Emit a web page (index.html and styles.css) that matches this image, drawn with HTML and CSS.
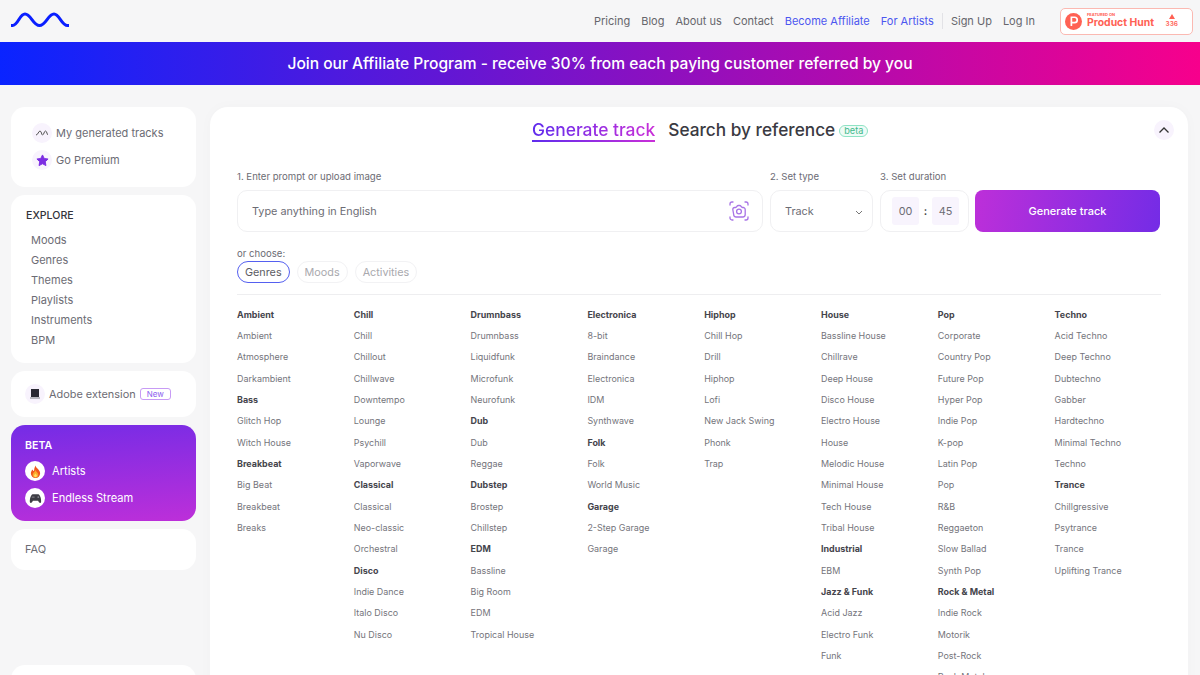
FILE: index.html
```html
<!DOCTYPE html>
<html lang="en">
<head>
<meta charset="utf-8">
<title>Mubert</title>
<link rel="stylesheet" href="styles.css">
</head>
<body>
<header class="topbar">
  <svg class="logo" viewBox="0 0 58 16" aria-hidden="true"><path d="M1.5 13.500 C7 13.500 8.500 2 14 2 C20 2 22 13.500 28.500 13.500 C35 13.500 37 2 43 2 C48.500 2 50.500 13.500 56.500 13.500" fill="none" stroke="#0a1fff" stroke-width="3" stroke-linecap="square"/></svg>
  <nav class="nav">
    <a>Pricing</a><a>Blog</a><a>About us</a><a>Contact</a>
    <a class="blue">Become Affiliate</a><a class="blue">For Artists</a>
    <span class="nav-sep"></span>
    <a>Sign Up</a><a>Log In</a>
  </nav>
  <div class="ph">
    <svg class="ph-logo" viewBox="0 0 16 16" aria-hidden="true"><circle cx="8" cy="8" r="8" fill="#ff6154"/><path d="M6 12.200V4h3a2.500 2.500 0 0 1 0 5H6" fill="none" stroke="#fff" stroke-width="1.600"/></svg>
    <div class="ph-text"><span class="ph-small">FEATURED ON</span><span class="ph-name">Product Hunt</span></div>
    <div class="ph-count"><span class="ph-tri"></span><span>336</span></div>
  </div>
</header>
<div class="banner">Join our Affiliate Program - receive 30% from each paying customer referred by you</div>
<div class="layout">
  <aside class="side">
    <section class="card card-top">
      <div class="side-row"><span class="ico"><svg viewBox="0 0 14 8" class="wave-mini"><path d="M1 6 C3 6 3.500 2 5 2 C6.500 2 6.500 6 7.500 6 C9 6 9 2 10.500 2 C12 2 12 6 13 6" fill="none" stroke="#555" stroke-width="1"/></svg></span>My generated tracks</div>
      <div class="side-row"><span class="ico"><svg viewBox="0 0 14 14" class="star"><path d="M7 1 L8.900 4.800 L13 5.400 L10 8.300 L10.700 12.500 L7 10.500 L3.300 12.500 L4 8.300 L1 5.400 L5.100 4.800 Z" fill="#7b2be2" stroke="#7b2be2" stroke-linejoin="round"/></svg></span>Go Premium</div>
    </section>
    <section class="card card-explore">
      <h3 class="explore-title">EXPLORE</h3>
      <ul class="explore-list">
        <li>Moods</li><li>Genres</li><li>Themes</li><li>Playlists</li><li>Instruments</li><li>BPM</li>
      </ul>
    </section>
    <section class="card card-adobe">
      <span class="ico"><svg viewBox="0 0 12 12" class="laptop"><rect x="2" y="1" width="8" height="8" fill="#2a2a33"/><rect x="1" y="9" width="10" height="2" fill="#b9b9c0"/></svg></span>Adobe extension<span class="new">New</span>
    </section>
    <section class="card-beta">
      <h3 class="beta-title">BETA</h3>
      <div class="beta-row"><span class="ico-white"><svg viewBox="0 0 14 14" class="emoji"><path d="M7 .500 C7.500 3.500 12 5 12 9 A5 5 0 0 1 2 9 C2 7 3 6 3.700 4.800 C4.300 6 5 6.500 5.400 6.500 C5.400 4.500 6 2.500 7 .500 Z" fill="#f0561f"/><path d="M7 5.500 C7.500 7.500 10 8.500 10 10.500 A3 3 0 0 1 4 10.500 C4 8.500 6.500 7.500 7 5.500 Z" fill="#fba92d"/><path d="M7 9 C7.300 10 8.500 10.700 8.500 11.700 A1.500 1.500 0 0 1 5.500 11.700 C5.500 10.700 6.700 10 7 9 Z" fill="#ffe066"/></svg></span>Artists</div>
      <div class="beta-row"><span class="ico-white"><svg viewBox="0 0 14 14" class="emoji"><path d="M4 2.500 H10 C12 2.500 13.500 8.500 13 11 C12.500 12.500 11 12 9.800 9.500 H4.200 C3 12 1.500 12.500 1 11 C.500 8.500 2 2.500 4 2.500 Z" fill="#3d3d44"/><circle cx="10" cy="5.500" r="1" fill="#8a8a92"/><rect x="3" y="5" width="3" height="1" fill="#8a8a92"/></svg></span>Endless Stream</div>
    </section>
    <section class="card card-faq">FAQ</section>
    <section class="card card-last"></section>
  </aside>
  <main class="panel">
    <div class="tabs">
      <span class="tab-active">Generate track</span>
      <span class="tab">Search by reference</span>
      <span class="beta-pill">beta</span>
      <span class="collapse"><svg viewBox="0 0 12 8" class="collapse-ico"><path d="M1.500 6.500 L6 2 L10.500 6.500" fill="none" stroke="#333" stroke-width="1.300"/></svg></span>
    </div>
    <div class="form">
      <div class="field field-prompt">
        <label class="lbl">1. Enter prompt or upload image</label>
        <div class="box box-prompt"><span>Type anything in English</span>
          <svg class="cam" viewBox="0 0 20 20" aria-hidden="true"><path d="M1 4V3a2 2 0 0 1 2-2h1M16 1h1a2 2 0 0 1 2 2v1M19 16v1a2 2 0 0 1-2 2h-1M4 19H3a2 2 0 0 1-2-2v-1" fill="none" stroke="#a874e6" stroke-width="1.300" stroke-linecap="round"/><path d="M3.800 8.500a2 2 0 0 1 2-2h.7c.6 0 1-.3 1.300-.8l.3-.5c.3-.5.7-.7 1.200-.7h1.400c.5 0 .9.200 1.200.7l.3.5c.3.500.7.800 1.300.8h.7a2 2 0 0 1 2 2v5a2.500 2.500 0 0 1-2.500 2.500h-6.500a2.500 2.500 0 0 1-2.500-2.500z" fill="none" stroke="#a874e6" stroke-width="1.300"/><circle cx="10" cy="10.500" r="2.400" fill="none" stroke="#a874e6" stroke-width="1.300"/></svg>
        </div>
      </div>
      <div class="field field-type">
        <label class="lbl">2. Set type</label>
        <div class="box box-type"><span>Track</span><svg class="chev" viewBox="0 0 8 5"><path d="M1 1 L4 4 L7 1" fill="none" stroke="#777" stroke-width="1"/></svg></div>
      </div>
      <div class="field field-dur">
        <label class="lbl">3. Set duration</label>
        <div class="box box-dur"><span class="num">00</span><b class="colon">:</b><span class="num">45</span></div>
      </div>
      <button class="gen-btn">Generate track</button>
    </div>
    <p class="or">or choose:</p>
    <div class="pills">
      <span class="pill pill-on">Genres</span><span class="pill">Moods</span><span class="pill">Activities</span>
    </div>
    <hr class="rule">
    <div class="genres">
      <ul class="gcol"><li class="h">Ambient</li><li>Ambient</li><li>Atmosphere</li><li>Darkambient</li><li class="h">Bass</li><li>Glitch Hop</li><li>Witch House</li><li class="h">Breakbeat</li><li>Big Beat</li><li>Breakbeat</li><li>Breaks</li></ul>
      <ul class="gcol"><li class="h">Chill</li><li>Chill</li><li>Chillout</li><li>Chillwave</li><li>Downtempo</li><li>Lounge</li><li>Psychill</li><li>Vaporwave</li><li class="h">Classical</li><li>Classical</li><li>Neo-classic</li><li>Orchestral</li><li class="h">Disco</li><li>Indie Dance</li><li>Italo Disco</li><li>Nu Disco</li></ul>
      <ul class="gcol"><li class="h">Drumnbass</li><li>Drumnbass</li><li>Liquidfunk</li><li>Microfunk</li><li>Neurofunk</li><li class="h">Dub</li><li>Dub</li><li>Reggae</li><li class="h">Dubstep</li><li>Brostep</li><li>Chillstep</li><li class="h">EDM</li><li>Bassline</li><li>Big Room</li><li>EDM</li><li>Tropical House</li></ul>
      <ul class="gcol"><li class="h">Electronica</li><li>8-bit</li><li>Braindance</li><li>Electronica</li><li>IDM</li><li>Synthwave</li><li class="h">Folk</li><li>Folk</li><li>World Music</li><li class="h">Garage</li><li>2-Step Garage</li><li>Garage</li></ul>
      <ul class="gcol"><li class="h">Hiphop</li><li>Chill Hop</li><li>Drill</li><li>Hiphop</li><li>Lofi</li><li>New Jack Swing</li><li>Phonk</li><li>Trap</li></ul>
      <ul class="gcol"><li class="h">House</li><li>Bassline House</li><li>Chillrave</li><li>Deep House</li><li>Disco House</li><li>Electro House</li><li>House</li><li>Melodic House</li><li>Minimal House</li><li>Tech House</li><li>Tribal House</li><li class="h">Industrial</li><li>EBM</li><li class="h">Jazz &amp; Funk</li><li>Acid Jazz</li><li>Electro Funk</li><li>Funk</li></ul>
      <ul class="gcol"><li class="h">Pop</li><li>Corporate</li><li>Country Pop</li><li>Future Pop</li><li>Hyper Pop</li><li>Indie Pop</li><li>K-pop</li><li>Latin Pop</li><li>Pop</li><li>R&amp;B</li><li>Reggaeton</li><li>Slow Ballad</li><li>Synth Pop</li><li class="h">Rock &amp; Metal</li><li>Indie Rock</li><li>Motorik</li><li>Post-Rock</li><li>Rock Metal</li></ul>
      <ul class="gcol"><li class="h">Techno</li><li>Acid Techno</li><li>Deep Techno</li><li>Dubtechno</li><li>Gabber</li><li>Hardtechno</li><li>Minimal Techno</li><li>Techno</li><li class="h">Trance</li><li>Chillgressive</li><li>Psytrance</li><li>Trance</li><li>Uplifting Trance</li></ul>
    </div>
  </main>
</div>
</body>
</html>
```
FILE: styles.css
```css
* { box-sizing: border-box; }
html, body { margin: 0; height: 675px; overflow: hidden; }
body { background: #f6f6f7; font-family: Inter, "Liberation Sans", sans-serif; color: #666; -webkit-font-smoothing: antialiased; }
ul { list-style: none; margin: 0; padding: 0; }
h3, p { margin: 0; }

.topbar { height: 42px; display: flex; align-items: center; padding: 0 7px 0 11px; background: #f6f6f7; }
.logo { width: 58px; height: 16px; margin-top: -2px; }
.nav { margin-left: auto; display: flex; align-items: center; gap: 11px; font-size: 11px; color: #66666c; }
.blue { color: #4c57f0; }
.nav-sep { width: 1px; height: 16px; background: #e2e2e6; margin: 0 -3px 0 -3px; }
.ph { margin-left: 25px; width: 133px; height: 27px; border: 1px solid #fbb9b2; border-radius: 5px; background: #fff; display: flex; align-items: center; padding: 0 14px 0 4px; }
.ph-logo { width: 17px; height: 17px; flex: none; }
.ph-text { display: flex; flex-direction: column; margin-left: 5px; color: #ff6154; line-height: 1; }
.ph-small { font-size: 4px; font-weight: 700; margin-bottom: 1px; }
.ph-name { font-size: 10.4px; font-weight: 700; }
.ph-count { margin-left: auto; display: flex; flex-direction: column; align-items: center; gap: 2px; color: #ff6154; font-size: 6.5px; font-weight: 600; line-height: 1; }
.ph-tri { width: 0; height: 0; border-left: 3.500px solid transparent; border-right: 3.500px solid transparent; border-bottom: 5px solid #ff6154; }

.banner { height: 43px; background: linear-gradient(90deg, #0a24ff 0%, #f7008c 100%); color: #fff; font-size: 15.55px; font-weight: 500; display: flex; align-items: center; justify-content: center; }

.layout { display: flex; gap: 14px; padding: 22px 12px 0 11px; align-items: flex-start; }
.side { width: 185px; flex: none; display: flex; flex-direction: column; gap: 8px; }
.card { background: #fff; border-radius: 14px; font-size: 11px; color: #6c6c74; }
.card-top { height: 80px; padding: 16px 0 0 21px; display: flex; flex-direction: column; gap: 7px; }
.side-row { display: flex; align-items: center; gap: 4px; height: 20px; }
.ico { width: 20px; height: 20px; border-radius: 50%; background: #f8f3fd; display: inline-flex; align-items: center; justify-content: center; flex: none; }
.wave-mini { width: 14px; height: 8px; }
.star { width: 13px; height: 13px; }
.laptop { width: 12px; height: 12px; }

.card-explore { height: 168px; padding: 14px 0 0 15px; }
.explore-title { font-size: 10.6px; font-weight: 500; color: #33333a; line-height: 13px; }
.explore-list { margin: 8px 0 0 5px; }
.explore-list li { height: 20px; line-height: 20px; }

.card-adobe { height: 46px; padding: 0 0 0 14px; display: flex; align-items: center; gap: 4px; font-size: 10.9px; }
.new { border: 1px solid #c79bf5; border-radius: 3px; color: #8c60ee; font-size: 8px; line-height: 10px; padding: 0 6px; }

.card-beta { height: 96px; border-radius: 14px; background: linear-gradient(175deg, #742ce6 0%, #bd2fd9 100%); color: #fff; font-size: 11.1px; padding: 14px 0 0 14px; }
.beta-title { font-size: 10.6px; font-weight: 600; line-height: 13px; margin-bottom: 9px; }
.beta-row { display: flex; align-items: center; gap: 7px; height: 20px; margin-bottom: 7px; }
.ico-white { width: 20px; height: 20px; border-radius: 50%; background: #fff; display: inline-flex; align-items: center; justify-content: center; flex: none; }
.emoji { width: 13px; height: 13px; }

.card-faq { height: 41px; display: flex; align-items: center; padding: 0 0 1px 14px; }
.card-last { height: 60px; margin-top: 87px; }

.panel { flex: 1; min-width: 0; height: 640px; background: #fff; border-radius: 18px 18px 0 0; padding: 0 27px 0 27px; box-shadow: 0 0 14px rgba(0,0,0,.025); }
.tabs { height: 47px; display: flex; align-items: center; padding: 0 0 0 295px; position: relative; }
.tab-active { font-size: 17.4px; font-weight: 500; line-height: 24px; margin-top: -2px; background: linear-gradient(90deg, #5f2ced, #c92fd8); -webkit-background-clip: text; background-clip: text; color: transparent; position: relative; }
.tab-active::after { content: ""; position: absolute; left: 0; right: 0; bottom: 0; height: 2px; background: linear-gradient(90deg, #5f2ced, #c92fd8); }
.tab { font-size: 17.25px; font-weight: 500; color: #3a3a42; margin: -2px 0 0 13px; }
.beta-pill { margin-left: 4px; border: 1px solid #8fe3c4; background: #eefbf6; color: #3fb98c; font-size: 9.2px; line-height: 10px; padding: 0 4px; border-radius: 6px; }
.collapse { position: absolute; right: -13px; top: 13px; width: 20px; height: 20px; border-radius: 50%; background: #f8f3fd; display: flex; align-items: center; justify-content: center; }
.collapse-ico { width: 12px; height: 8px; }

.form { display: flex; gap: 7px; align-items: flex-end; margin-top: 17px; }
.field { display: flex; flex-direction: column; }
.field-prompt { width: 526px; }
.field-type { width: 103px; }
.field-dur { width: 89px; }
.lbl { font-size: 9.6px; color: #6c6c74; line-height: 12px; margin-bottom: 7px; }
.box { height: 42px; border: 1px solid #f0f0f2; border-radius: 10px; display: flex; align-items: center; font-size: 10.85px; color: #6c6c74; background: #fff; }
.box-prompt { padding: 0 13px 0 14px; justify-content: space-between; }
.cam { width: 20px; height: 20px; }
.box-type { padding: 0 9px 0 14px; justify-content: space-between; }
.chev { width: 8px; height: 5px; margin-top: 3px; }
.box-dur { padding: 0 9px 0 11px; justify-content: space-between; }
.num { width: 27px; height: 28px; background: #f8f4fd; border-radius: 3px; display: flex; align-items: center; justify-content: center; }
.colon { font-weight: 600; color: #444; }
.gen-btn { width: 185px; height: 42px; margin-left: -1px; border: 0; border-radius: 8px; background: linear-gradient(100deg, #bd2fd9 0%, #742ce6 100%); color: #fff; font: 500 11px Inter, "Liberation Sans", sans-serif; }

.or { font-size: 9.6px; line-height: 12px; color: #6c6c74; margin-top: 16px; }
.pills { display: flex; gap: 7px; margin-top: 1px; }
.pill { height: 22px; border: 1px solid #f2f2f4; border-radius: 11px; font-size: 10.8px; line-height: 21px; padding: 0 7px; color: #a9a9ae; }
.pill-on { border: 1px solid #5560f0; color: #5c5c63; }
.rule { border: 0; border-top: 1px solid #eeeef0; margin: 11px 0 0; }
.genres { display: grid; grid-template-columns: repeat(8, 116.800px); margin-top: 8.600px; }
.gcol li { height: 21.330px; line-height: 21.330px; font-size: 8.95px; color: #74747b; white-space: nowrap; }
.gcol li.h { font-weight: 700; color: #45454c; }
```
